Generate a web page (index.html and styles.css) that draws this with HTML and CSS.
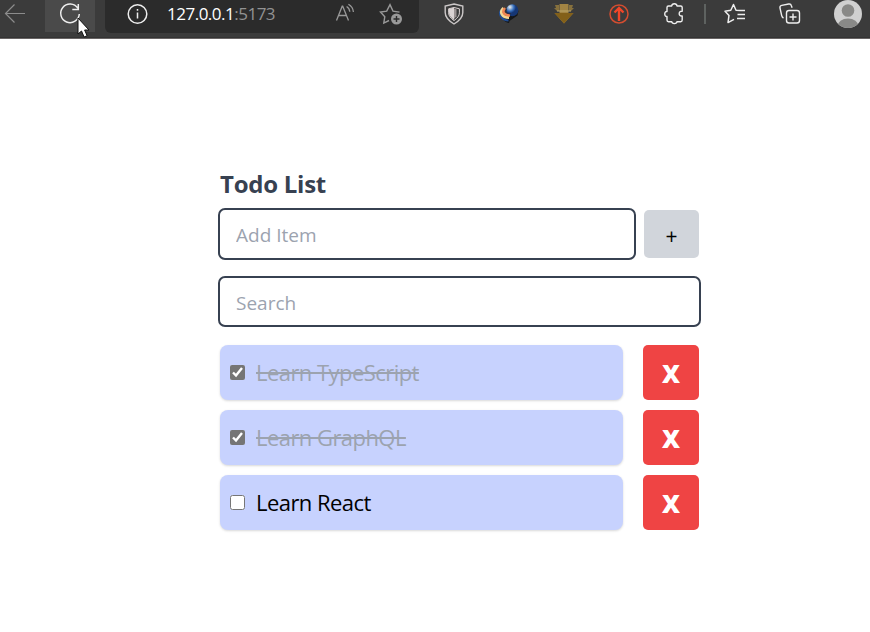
FILE: index.html
```html
<!DOCTYPE html>
<html lang="en">
<head>
<meta charset="utf-8">
<title>Todo List</title>
<link rel="stylesheet" href="styles.css">
</head>
<body>
<header class="toolbar">
  <div class="back"><svg width="30" height="30" viewBox="0 0 30 30" stroke="#8c8c8c" stroke-width="1.2"><path d="M25 13.5H5.5M14.5 4.5l-9 9 9 9"/></svg></div>
  <div class="reload">
    <svg width="30" height="30" viewBox="0 0 30 30" stroke="#eee" stroke-width="1.5"><path d="M22.8 8.200A9.300 9.300 0 1 0 24.300 14M23.300 4v5.500h-6"/></svg>
    <svg class="cursor" width="14" height="22" viewBox="0 0 14 22"><path d="M1 1v16l3.500-3 2.600 6 3-1.300-2.500-5.700H12z" fill="#fff" stroke="#111"/></svg>
  </div>
  <div class="address">
    <svg class="info" width="30" height="30" viewBox="0 0 30 30" stroke="#eee" stroke-width="1.500"><circle cx="15.500" cy="14" r="9.300"/><path d="M15.500 12.500v6M15.500 9v1.800"/></svg>
    <span class="url">127.0.0.1<span class="port">:5173</span></span>
    <svg class="read" width="30" height="30" viewBox="0 0 30 30" stroke="#999" stroke-width="1.300"><path d="M6.500 20.500l5.700-14.300h.5l5.800 14.300M8.400 15.500h8.200M16.600 6.500c2 1.200 3 3 3.200 5.200M18.400 4.200c3 1.700 4.800 4.500 5 7.800"/></svg>
    <svg class="favorite" width="30" height="30" viewBox="0 0 30 30" stroke="#999" stroke-width="1.400"><path d="M13 20.500l-5.200 2.600 1-6.400-4.300-4.600 6.200-1L14 4.700l3 6.400 6.500 1"/><circle cx="20.500" cy="19" r="5.500" fill="#999" stroke="none"/><path d="M20.500 16v6M17.500 19h6" stroke="#2b2b2b"/></svg>
  </div>
  <div class="extensions">
    <svg viewBox="0 0 30 30"><path d="M15 4l8.800 2v6.500c0 4.500-3 8-8.800 11.500-5.800-3.500-8.800-7-8.800-11.500V6z" fill="#3b3b3b" stroke="#ccc8c8" stroke-width="1.400"/><path d="M15 7.500l5.400 1.300v4c0 3-2 5.300-5.400 7.800-3.400-2.500-5.400-4.800-5.400-7.800v-4z" stroke="#d8d0d0"/><path d="M10 9l5-1.500v12.500c-3-2.500-5-4.500-5-7z" fill="#d9d2d2"/><path d="M15 8.500l2.500.8v7L15 19z" fill="#999191"/></svg>
    <svg viewBox="0 0 30 30"><defs><radialGradient id="globe" cx=".3" cy=".25"><stop stop-color="#f2eee3"/><stop offset=".28" stop-color="#9fb9d8"/><stop offset=".65" stop-color="#3870bd"/><stop offset="1" stop-color="#153674"/></radialGradient></defs><path d="M8 18c2 3 4 4.500 7 5l.5-2 8-5.500 1-5z" fill="#151719"/><circle cx="18.300" cy="10.200" r="6" fill="url(#globe)"/><path d="M7 10c-3 5 1.500 10.500 7.500 10.500" stroke="#204d93" stroke-width="2"/><path d="M9.500 8c-4.500 4-1.500 9.500 5.500 9.500" stroke="#f2d895" stroke-width="2.800"/><path d="M11 8c-3.500 4-1 7.500 5 7.500" stroke="#ef8553" stroke-width="2.500"/><path d="M12.500 9c-1.500 3 0 5 4.500 4.700" stroke="#332c38"/></svg>
    <svg viewBox="0 0 30 30"><path d="M6 5h4v6H8L5 8h2zM24 5h-4v6h2l3-3h-2z" fill="#87713d"/><path d="M10.500 4h9v9h5L15 23.500 5.500 13h5z" fill="#a28443"/><path d="M5.500 13h19L15 23.500z" fill="#836019"/><path d="M8 11h14" stroke="#bba76c"/></svg>
    <svg viewBox="0 0 30 30"><circle cx="15" cy="14" r="9" stroke="#d34d30" stroke-width="1.500"/><path d="M15 21V8M10.500 12.500L15 8l4.500 4.500" stroke="#f14628" stroke-width="2.400"/></svg>
    <svg viewBox="0 0 30 30" stroke="#eee" stroke-width="1.400" stroke-linejoin="round"><path d="M9.500 6h3.200c.3-3 5-3 5.300 0h3.700q1.500 0 1.500 1.500v3.800c-4-.7-4 5.400 0 4.700v4q0 1.700-1.500 1.700H18c-.3 2.500-5 2.500-5.300 0H9.500Q8 21.700 8 20v-3.500c-3 .5-3-5.500 0-5V7.500Q8 6 9.500 6z"/></svg>
  </div>
  <div class="divider"></div>
  <div class="actions">
    <svg viewBox="0 0 30 30" stroke="#eee" stroke-width="1.500" stroke-linejoin="round"><path d="M20.500 10.500l-4.500-.3-2.500-5.700-2.700 5.700-5.800 1 4 4.200-1 7.200 6-3.200M18 10.500h7M17.500 14.500H25M17 18.500h8"/></svg>
    <svg viewBox="0 0 30 30" stroke="#eee" stroke-width="1.400"><rect x="11.500" y="10.500" width="13" height="12.500" rx="2.500"/><path d="M18 13.500v7M14.500 17h7M8.500 18c-1-.5-1.500-1-1.800-2.300L5 8c-.3-1.500.3-2.300 1.700-2.600l7-1.400c1.500-.3 2.300.3 2.700 1.700l.7 2"/></svg>
  </div>
  <svg class="avatar" width="28" height="28" viewBox="0 0 28 28"><defs><clipPath id="round"><circle cx="14" cy="14" r="14"/></clipPath></defs><g clip-path="url(#round)"><path d="M0 0h28v28H0z" fill="#d0d0d0"/><circle cx="14" cy="10.500" r="6.300" fill="#898987"/><ellipse cx="14" cy="26.500" rx="10.500" ry="8" fill="#898987"/></g></svg>
</header>
<main class="todo">
  <h1>Todo List</h1>
  <form class="add"><input class="field" type="text" placeholder="Add Item"><button class="plus" type="button">+</button></form>
  <input class="field search" type="text" placeholder="Search">
  <ul class="list">
    <li><label class="item done"><input type="checkbox" checked><span>Learn TypeScript</span></label><button class="remove">X</button></li>
    <li><label class="item done"><input type="checkbox" checked><span>Learn GraphQL</span></label><button class="remove">X</button></li>
    <li><label class="item"><input type="checkbox"><span>Learn React</span></label><button class="remove">X</button></li>
  </ul>
</main>
</body>
</html>
```
FILE: styles.css
```css
* { box-sizing: border-box; }
body { margin: 0; height: 632px; overflow: hidden; background: #fff; font-family: "Open Sans", "Noto Sans", sans-serif; }
button, input { font-family: inherit; }
svg { display: block; fill: none; flex: none; }
.toolbar { display: flex; align-items: flex-start; height: 39px; background: #3b3b3b; border-bottom: 1px solid #686464; box-shadow: inset 0 -1px #333; }
.back { width: 45px; }
.reload { position: relative; width: 50px; height: 32px; padding-left: 10px; background: #4a4a4a; }
.cursor { position: absolute; left: 32px; top: 17px; }
.address { display: flex; width: 314px; height: 33px; margin-left: 10px; padding-left: 17px; background: #2b2b2b; border-radius: 0 0 6px 6px; }
.url { width: 163px; margin-left: 15px; color: #fff; font-size: 17px; line-height: 28px; letter-spacing: -.5px; white-space: nowrap; }
.port { color: #929292; }
.favorite { margin-left: 16px; }
.extensions { display: flex; gap: 25px; margin-left: 20px; }
.extensions svg, .actions svg { width: 30px; height: 30px; }
.divider { width: 2px; height: 20px; margin: 4px 0 0 15px; background: #5e6260; }
.actions { display: flex; gap: 25px; margin-left: 14px; }
.avatar { margin-left: 29px; }
.todo { width: 483px; margin: 130px 0 0 218px; }
h1 { margin: 0 0 7px 2px; height: 32px; color: #374151; font-size: 24px; font-weight: 700; line-height: 29px; letter-spacing: -.25px; }
.add { display: flex; align-items: center; gap: 8px; margin: 0 0 16px; }
.field { display: block; width: 418px; height: 52px; padding: 2px 16px 0; border: 2px solid #374151; border-radius: 7px; background: #fff; font-size: 19px; outline: 0; }
.field::placeholder { color: #9ca3af; opacity: 1; }
.plus { width: 55px; height: 48px; padding: 3px 0 0; border: 0; border-radius: 5px; background: #d1d5db; color: #000; font-size: 21px; }
.search { width: 483px; height: 51px; }
.list { display: grid; gap: 10px; margin: 18px 0 0 2px; padding: 0; list-style: none; }
.list li { display: flex; gap: 20px; }
.item { display: flex; align-items: center; width: 403px; height: 55px; padding-left: 10px; border-radius: 8px; background: #c7d2fe; box-shadow: 0 1px 3px #0000001a, 0 1px 2px #0000000f; color: #000; font-size: 22px; }
.item input { width: 15px; height: 15px; margin: 0 11px 0 0; accent-color: #757575; }
.item span { line-height: 32px; padding-bottom: 2px; white-space: nowrap; letter-spacing: -.55px; }
.done span { color: #9ca3af; text-decoration: line-through; text-decoration-thickness: 2px; }
.remove { width: 56px; height: 55px; padding: 1px 0 0; border: 0; border-radius: 5px; background: #ef4444; color: #fff; font-size: 25px; font-weight: 800; }
```
